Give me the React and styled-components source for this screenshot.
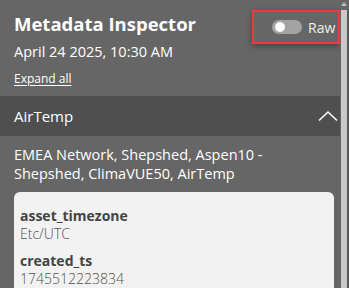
import React, { useState } from 'react';
import styled, { createGlobalStyle } from 'styled-components';

const FONT = '"Open Sans", "Noto Sans", Arial, sans-serif';

const GlobalStyle = createGlobalStyle`
  html, body {
    margin: 0;
    padding: 0;
    background: #666666;
  }
  body {
    font-family: ${FONT};
    overflow: hidden;
  }
`;

const Frame = styled.div`
  display: flex;
  width: 349px;
  height: 288px;
  background: #666666;
  color: #ffffff;
`;

const Content = styled.div`
  flex: 1;
  min-width: 0;
  overflow: hidden;
`;

const Rail = styled.div`
  display: flex;
  flex-direction: column;
  width: 9px;
  background: #666666;
`;

const RailArrow = styled.div`
  height: 10px;
  display: flex;
  justify-content: center;
  padding: 2px 1px 0 0;
  box-sizing: border-box;
`;

const Thumb = styled.div`
  flex: 1;
  margin-left: 1px;
  background: #c9c9c9;
  border-right: 2px solid #575757;
`;

const Header = styled.div`
  height: 96px;
  box-sizing: border-box;
  padding: 12px 0 0 14px;
`;

const TopRow = styled.div`
  display: flex;
  justify-content: space-between;
  align-items: flex-start;
`;

const Title = styled.h1`
  margin: 0;
  font-size: 18.5px;
  line-height: 24px;
  font-weight: 700;
  color: #ffffff;
`;

const RawBox = styled.label`
  display: flex;
  align-items: center;
  gap: 6px;
  width: 88px;
  height: 34px;
  margin: -2px 0 -10px;
  box-sizing: border-box;
  padding-left: 18px;
  border: 2px solid #ec3b3d;
  box-shadow: 0 2px 6px rgba(0, 0, 0, 0.35);
  cursor: pointer;
`;

const Track = styled.span`
  position: relative;
  width: 30px;
  height: 14px;
  border-radius: 7px;
  background: ${p => (p.$on ? '#8fc1e8' : '#a3a3a3')};
`;

const Knob = styled.span`
  position: absolute;
  top: 2px;
  left: ${p => (p.$on ? '18px' : '3px')};
  width: 10px;
  height: 10px;
  border-radius: 50%;
  background: #ffffff;
`;

const RawLabel = styled.span`
  font-size: 14px;
  color: #f0f0f0;
`;

const DateLine = styled.div`
  margin-top: 6px;
  font-size: 14.5px;
  line-height: 20px;
`;

const ExpandLink = styled.a`
  display: inline-block;
  margin-top: 9px;
  font-size: 12px;
  line-height: 16px;
  color: #ffffff;
  text-decoration: underline;
  text-underline-offset: 2px;
  cursor: pointer;
`;

const SectionBar = styled.div`
  display: flex;
  align-items: center;
  justify-content: space-between;
  height: 40px;
  padding: 0 2px 0 14px;
  background: #4f4f4f;
  font-size: 15px;
`;

const Path = styled.div`
  padding: 9px 14px 0;
  font-size: 14.5px;
  line-height: 19px;
`;

const Card = styled.div`
  margin: 9px 6px 12px 14px;
  padding: 15px 6px 8px;
  background: #f2f2f2;
  border-radius: 6px;
  color: #444444;
`;

const Entry = styled.div`
  & + & {
    margin-top: 9px;
  }
`;

const Key = styled.div`
  font-size: 14px;
  line-height: 18px;
  font-weight: 700;
`;

const Value = styled.div`
  font-size: 14px;
  line-height: 18px;
  font-weight: 300;
  color: #505050;
`;

const Chevron = () => (
  <svg width="20" height="12" viewBox="0 0 20 12" fill="none">
    <path d="M1 10.5 L10 2 L19 10.5" stroke="#ffffff" strokeWidth="1.6" />
  </svg>
);

const UpArrow = () => (
  <svg width="6" height="5" viewBox="0 0 6 5">
    <path d="M3 0 L6 4 L0 4 Z" fill="#bdbdbd" />
  </svg>
);

const metadata = [
  { key: 'asset_timezone', value: 'Etc/UTC' },
  { key: 'created_ts', value: '1745512223834' },
];

export default function App() {
  const [raw, setRaw] = useState(false);
  return (
    <>
      <GlobalStyle />
      <Frame>
        <Content>
          <Header>
            <TopRow>
              <Title>Metadata Inspector</Title>
              <RawBox onClick={() => setRaw(!raw)}>
                <Track $on={raw}>
                  <Knob $on={raw} />
                </Track>
                <RawLabel>Raw</RawLabel>
              </RawBox>
            </TopRow>
            <DateLine>April 24 2025, 10:30 AM</DateLine>
            <ExpandLink>Expand all</ExpandLink>
          </Header>
          <SectionBar>
            <span>AirTemp</span>
            <Chevron />
          </SectionBar>
          <Path>EMEA Network, Shepshed, Aspen10 - Shepshed, ClimaVUE50, AirTemp</Path>
          <Card>
            {metadata.map(m => (
              <Entry key={m.key}>
                <Key>{m.key}</Key>
                <Value>{m.value}</Value>
              </Entry>
            ))}
          </Card>
        </Content>
        <Rail>
          <RailArrow>
            <UpArrow />
          </RailArrow>
          <Thumb />
        </Rail>
      </Frame>
    </>
  );
}
